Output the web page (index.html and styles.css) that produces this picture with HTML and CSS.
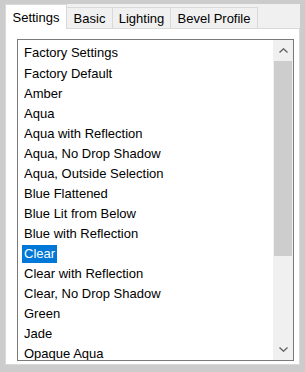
FILE: index.html
```html
<!DOCTYPE html>
<html>
<head>
<meta charset="utf-8">
<link rel="stylesheet" href="styles.css">
</head>
<body>
<div class="dialog">
  <div class="tabs">
    <div class="tab tab-settings selected">Settings</div>
    <div class="tab tab-basic">Basic</div>
    <div class="tab tab-lighting">Lighting</div>
    <div class="tab tab-bevel">Bevel Profile</div>
  </div>
  <div class="panel">
    <div class="listbox">
      <ul class="items">
        <li class="item first"><span>Factory Settings</span></li>
        <li class="item"><span>Factory Default</span></li>
        <li class="item"><span>Amber</span></li>
        <li class="item"><span>Aqua</span></li>
        <li class="item"><span>Aqua with Reflection</span></li>
        <li class="item"><span>Aqua, No Drop Shadow</span></li>
        <li class="item"><span>Aqua, Outside Selection</span></li>
        <li class="item"><span>Blue Flattened</span></li>
        <li class="item"><span>Blue Lit from Below</span></li>
        <li class="item"><span>Blue with Reflection</span></li>
        <li class="item active"><span>Clear</span></li>
        <li class="item"><span>Clear with Reflection</span></li>
        <li class="item"><span>Clear, No Drop Shadow</span></li>
        <li class="item"><span>Green</span></li>
        <li class="item"><span>Jade</span></li>
        <li class="item"><span>Opaque Aqua</span></li>
      </ul>
      <div class="scrollbar">
        <div class="sb-btn">
          <svg width="9" height="5" viewBox="0 0 9 5"><polyline points="0.5,4.5 4.5,0.8 8.5,4.5" fill="none" stroke="#606060" stroke-width="1.3"/></svg>
        </div>
        <div class="sb-track">
          <div class="sb-thumb"></div>
        </div>
        <div class="sb-btn">
          <svg width="9" height="5" viewBox="0 0 9 5"><polyline points="0.5,0.5 4.5,4.2 8.5,0.5" fill="none" stroke="#606060" stroke-width="1.3"/></svg>
        </div>
      </div>
    </div>
  </div>
</div>
</body>
</html>
```
FILE: styles.css
```css
html, body {
  margin: 0;
  padding: 0;
}
body {
  background: #cccccc;
  width: 305px;
  height: 372px;
  overflow: hidden;
  font-family: "Liberation Sans", Arial, sans-serif;
  font-size: 13px;
  color: #000;
}
.dialog {
  margin: 4px 5px 7px 5px;
  width: 295px;
  height: 361px;
  background: #f0f0f0;
  display: flex;
  flex-direction: column;
}
.tabs {
  height: 24px;
  display: flex;
  align-items: flex-end;
  position: relative;
  z-index: 2;
}
.tab {
  box-sizing: border-box;
  height: 21px;
  border: 1px solid #d9d9d9;
  border-bottom: none;
  background: #f0f0f0;
  display: flex;
  align-items: center;
  justify-content: center;
  margin-left: -1px;
  padding-top: 1px;
}
.tab.selected {
  height: 25px;
  margin-bottom: -1px;
  background: #ffffff;
  margin-left: 0;
  position: relative;
  z-index: 3;
  padding-top: 0;
}
.tab-settings { width: 62px; }
.tab-basic { width: 47px; }
.tab-lighting { width: 59px; }
.tab-bevel { width: 88px; }
.panel {
  box-sizing: border-box;
  height: 337px;
  border: 1px solid #d9d9d9;
  background: #ffffff;
  padding: 10px 5px 3px 11px;
}
.listbox {
  box-sizing: border-box;
  width: 277px;
  height: 322px;
  border: 1px solid #7a7a7a;
  display: flex;
  overflow: hidden;
}
.items {
  list-style: none;
  margin: 0;
  padding: 2px 0 0 0;
  flex: 1;
  overflow: hidden;
}
.item {
  height: 20px;
  display: flex;
  align-items: center;
  padding-left: 4px;
  white-space: nowrap;
}
.item.first {
  height: 22px;
  padding-bottom: 1px;
  box-sizing: border-box;
}
.item span {
  padding: 0 2px;
  line-height: 18px;
}
.item.active span {
  background: #0078d7;
  color: #ffffff;
}
.scrollbar {
  width: 20px;
  display: flex;
  flex-direction: column;
  background: #f0f0f0;
}
.sb-btn {
  height: 21px;
  display: flex;
  align-items: center;
  justify-content: center;
}
.sb-track {
  flex: 1;
}
.sb-thumb {
  height: 195px;
  background: #cdcdcd;
  margin: 0 1px;
}
```
